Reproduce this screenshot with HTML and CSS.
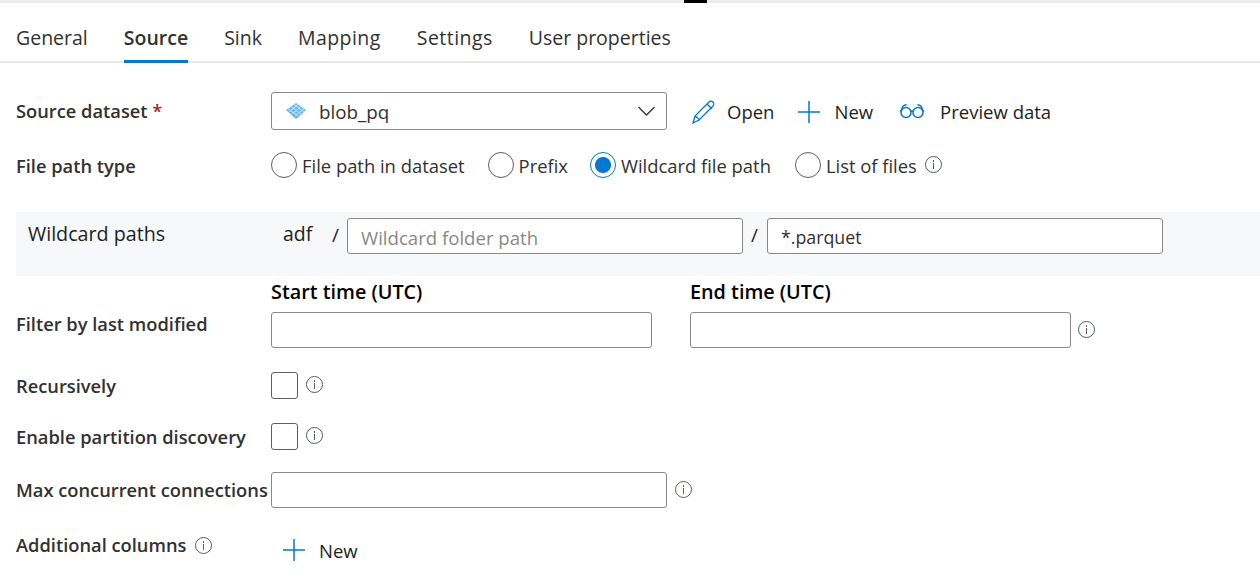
FILE: index.html
```html
<!DOCTYPE html>
<html lang="en">

<head>
  <meta charset="utf-8" />
  <title>Source</title>
  <link rel="stylesheet" href="styles.css">
</head>

<body>
  <div class="topbar"><span class="grip"></span></div>

  <ul class="tabs">
    <li>General</li>
    <li class="active">Source</li>
    <li>Sink</li>
    <li class="tab-wide">Mapping</li>
    <li class="tab-wide">Settings</li>
    <li>User properties</li>
  </ul>

  <div class="row row-dataset">
    <label class="label">Source dataset <span class="req">*</span></label>
    <div class="select">
      <svg class="ds-icon" width="20" height="16" viewBox="0 0 20 16">
        <path d="M10 0l10 7-10 9L0 7z" fill="#64b5f6" />
        <path d="M5 3.500l10 7.500M8 1.500l10 7.500M2 5.500l10 7.500M15 3.500L6 11M12 1.500L3 9M18 5.500L9 13" stroke="#d3eafd" stroke-width="1" fill="none" />
      </svg>
      <span class="select-text">blob_pq</span>
      <svg class="chevron" width="17" height="10" viewBox="0 0 17 10">
        <path d="M.5 1l8 8 8-8" stroke="#333" stroke-width="1.3" fill="none" />
      </svg>
    </div>
    <a class="action action-open">
      <svg width="26" height="26" viewBox="0 0 26 26">
        <path d="M2 24l2-7L18 3c1-1 3-1 4 0s1 3 0 4L8 21zM4 17l5 4M16 5l5 5" stroke="#0078d4" stroke-width="1.3" fill="none" />
      </svg>
      Open
    </a>
    <a class="action action-new">
      <svg width="24" height="24" viewBox="0 0 24 24">
        <path d="M12 1v22M1 12h22" stroke="#0078d4" stroke-width="1.5" fill="none" />
      </svg>
      New
    </a>
    <a class="action action-preview">
      <svg width="26" height="16" viewBox="0 0 26 16">
        <circle cx="7" cy="9.500" r="5" stroke="#0078d4" stroke-width="1.500" fill="none" />
        <circle cx="19" cy="9.500" r="5" stroke="#0078d4" stroke-width="1.500" fill="none" />
        <path d="M12 8.500c.7-.6 1.300-.6 2 0M1.500 9l2.500-6 3.500-1.500M24.500 9L22 3l-3.500-1.500" stroke="#0078d4" stroke-width="1.500" fill="none" />
      </svg>
      Preview data
    </a>
  </div>

  <div class="row row-type">
    <label class="label">File path type</label>
    <div class="radios">
      <span class="radio-item"><i class="radio"></i>File path in dataset</span>
      <span class="radio-item item-prefix"><i class="radio"></i>Prefix</span>
      <span class="radio-item item-wild"><i class="radio checked"></i>Wildcard file path</span>
      <span class="radio-item item-list"><i class="radio"></i>List of files<i class="info"></i></span>
    </div>
  </div>

  <div class="wildcard">
    <span class="wild-label">Wildcard paths</span>
    <span class="wild-adf">adf</span>
    <span class="slash">/</span>
    <div class="input wide placeholder">Wildcard folder path</div>
    <span class="slash slash-end">/</span>
    <div class="input wide">*.parquet</div>
  </div>

  <div class="row row-filter">
    <label class="label">Filter by last modified</label>
    <div class="time">
      <div class="caption">Start time (UTC)</div>
      <div class="input time-input"></div>
    </div>
    <div class="time">
      <div class="caption">End time (UTC)</div>
      <div class="input time-input"></div>
    </div>
    <i class="info"></i>
  </div>

  <div class="row row-check">
    <label class="label">Recursively</label>
    <i class="check"></i>
    <i class="info"></i>
  </div>

  <div class="row row-check">
    <label class="label">Enable partition discovery</label>
    <i class="check"></i>
    <i class="info"></i>
  </div>

  <div class="row row-max">
    <label class="label">Max concurrent connections</label>
    <div class="input wide"></div>
    <i class="info warm"></i>
  </div>

  <div class="row row-columns">
    <label class="label">Additional columns<i class="info"></i></label>
    <a class="action">
      <svg class="plus-up" width="24" height="24" viewBox="0 0 24 24">
        <path d="M12 1v22M1 12h22" stroke="#0078d4" stroke-width="1.5" fill="none" />
      </svg>
      New
    </a>
  </div>
</body>

</html>
```

FILE: styles.css
```css
body {
  margin: 0;
  height: 576px;
  overflow: hidden;
  background: #fff;
  color: #323130;
  font-family: "Open Sans", "Noto Sans", sans-serif;
  font-size: 18.3px;
}

ul {
  list-style: none;
  margin: 0;
  padding: 0;
}

.topbar {
  height: 3px;
  background: #ececec;
  position: relative;
}

.grip {
  position: absolute;
  left: 684px;
  top: 0;
  width: 23px;
  height: 3px;
  background: #000;
}

.tabs {
  display: flex;
  gap: 36px;
  height: 58px;
  padding-left: 16px;
  border-bottom: 2px solid #e8e8e8;
  font-size: 19.5px;
}

.tabs li {
  height: 60px;
  box-sizing: border-box;
  padding-top: 21px;
  line-height: 28px;
}

.tabs .active {
  font-weight: 600;
  border-bottom: 3px solid #0078d4;
}

.tabs .tab-wide {
  letter-spacing: .45px;
}

.row {
  display: flex;
  align-items: center;
  padding-left: 16px;
}

.label {
  width: 255px;
  flex: none;
  font-weight: 600;
  white-space: nowrap;
}

.req {
  color: #a4262c;
}

.row-dataset {
  margin-top: 29px;
  height: 38px;
}

.row-dataset .label {
  margin-bottom: 1px;
}

.select {
  width: 396px;
  height: 38px;
  box-sizing: border-box;
  border: 1px solid #8a8886;
  border-radius: 3px;
  display: flex;
  align-items: center;
  padding: 0 11px 0 14px;
}

.select-text {
  flex: 1;
  margin: 2px 0 0 13px;
  font-size: 18.8px;
}

.action {
  display: flex;
  align-items: center;
  color: #201f1e;
  font-size: 18.5px;
  padding-top: 1px;
}

.action-open {
  margin-left: 24px;
  gap: 10px;
}

.action-new {
  margin-left: 23px;
  gap: 13px;
}

.action-preview {
  margin-left: 26px;
  gap: 15px;
}

.action-preview svg {
  margin-top: -2px;
}

.row-type {
  margin-top: 22px;
  height: 26px;
}

.radios {
  display: flex;
  align-items: center;
  font-size: 18.4px;
}

.radio-item {
  display: flex;
  align-items: center;
  gap: 5px;
}

.item-prefix {
  margin-left: 23px;
}

.item-wild {
  margin-left: 22px;
}

.item-list {
  margin-left: 24px;
}

.radio {
  display: block;
  width: 26px;
  height: 26px;
  box-sizing: border-box;
  border: 1px solid #605e5c;
  border-radius: 50%;
  background: #fff;
}

.radio.checked {
  border-color: #0078d4;
  background: radial-gradient(circle, #0078d4 0 7.5px, #fff 8.5px);
}

.info {
  display: inline-block;
  width: 17px;
  height: 17px;
  box-sizing: border-box;
  border: 1px solid #505a6b;
  border-radius: 50%;
  flex: none;
  margin-left: 7px;
  background:
    linear-gradient(#605e5c, #605e5c) 7px 3px / 1px 2px no-repeat,
    linear-gradient(#605e5c, #605e5c) 7px 6px / 1px 6px no-repeat;
}

.radio-item .info {
  margin: 0 0 2px 3px;
}

.wildcard {
  margin: 34px 0 0 16px;
  height: 64px;
  background: #f7f8f9;
  display: flex;
  align-items: flex-start;
  padding-top: 6px;
  box-sizing: border-box;
}

.wild-label {
  width: 255px;
  padding-left: 12px;
  box-sizing: border-box;
  line-height: 32px;
  font-size: 19.7px;
  flex: none;
  color: #201f1e;
}

.wild-adf {
  width: 49px;
  padding-left: 12px;
  box-sizing: border-box;
  line-height: 32px;
  font-size: 19.4px;
  color: #201f1e;
}

.slash {
  width: 27px;
  line-height: 34px;
  font-size: 19px;
  color: #201f1e;
  padding-left: 12px;
  box-sizing: border-box;
}

.slash-end {
  width: 24px;
  padding-left: 8px;
}

.input {
  height: 36px;
  box-sizing: border-box;
  border: 1px solid #8a8886;
  border-radius: 3px;
  background: #fff;
  padding-left: 13px;
  line-height: 37px;
  font-size: 17.8px;
  color: #323130;
  flex: none;
}

.wide {
  width: 396px;
}

.placeholder {
  color: #8a8886;
  font-size: 18.6px;
}

.row-filter {
  height: 72px;
  align-items: flex-end;
}

.row-filter .label {
  padding-bottom: 12px;
}

.time {
  width: 419px;
  flex: none;
}

.caption {
  font-size: 19.8px;
  font-weight: 600;
  color: #000;
  line-height: 30px;
  padding-top: 1px;
  margin-bottom: 5px;
}

.time-input {
  width: 381px;
}

.row-filter .info {
  margin: 0 0 10px -31px;
}

.info.warm {
  border-color: #6b5a45;
}

.row-check {
  margin-top: 24px;
  height: 27px;
}

.check {
  display: block;
  width: 27px;
  height: 27px;
  box-sizing: border-box;
  border: 1px solid #605e5c;
  border-radius: 3px;
}

.row-check .info {
  margin: 0 0 2px 8px;
}

.row-max {
  margin-top: 22px;
  height: 36px;
}

.row-max .label {
  margin-bottom: 1px;
}

.row-max .info {
  margin: 0 0 2px 8px;
}

.row-columns {
  margin-top: 24px;
  height: 40px;
  align-items: flex-start;
}

.row-columns .label {
  display: flex;
  align-items: center;
  line-height: 26px;
}

.row-columns .label .info {
  margin-left: 9px;
}

.row-columns .action {
  margin-left: 11px;
  gap: 13px;
  line-height: 28px;
  padding-top: 5px;
}

.plus-up {
  margin-top: -3px;
}
```
